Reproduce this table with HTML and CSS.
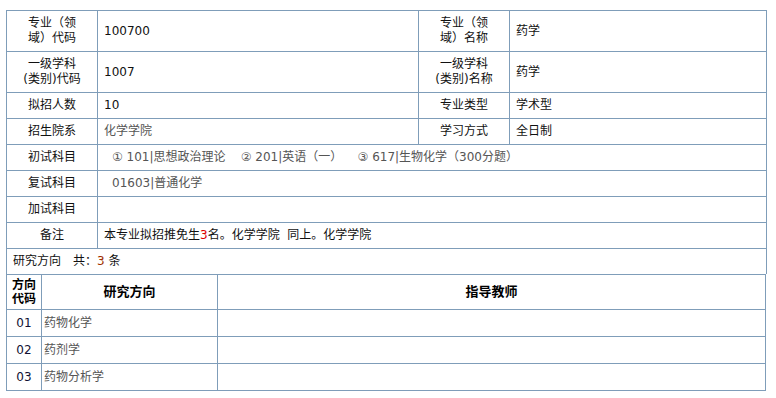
FILE: index.html
```html
<!DOCTYPE html>
<html lang="zh-CN">
<head>
<meta charset="utf-8">
<title>专业信息</title>
<link rel="stylesheet" href="styles.css">
</head>
<body>
<table class="info">
  <colgroup>
    <col class="c-label">
    <col class="c-value">
    <col class="c-label">
    <col class="c-value2">
  </colgroup>
  <tr class="tall">
    <td class="label">专业（领<br>域）代码</td>
    <td class="value">100700</td>
    <td class="label">专业（领<br>域）名称</td>
    <td class="value">药学</td>
  </tr>
  <tr class="tall">
    <td class="label">一级学科<br>(类别)代码</td>
    <td class="value">1007</td>
    <td class="label">一级学科<br>(类别)名称</td>
    <td class="value">药学</td>
  </tr>
  <tr>
    <td class="label">拟招人数</td>
    <td class="value">10</td>
    <td class="label">专业类型</td>
    <td class="value">学术型</td>
  </tr>
  <tr>
    <td class="label">招生院系</td>
    <td class="value gray">化学学院</td>
    <td class="label">学习方式</td>
    <td class="value">全日制</td>
  </tr>
  <tr>
    <td class="label">初试科目</td>
    <td class="value gray indent" colspan="3">①&nbsp;101|思想政治理论&nbsp;&nbsp;&nbsp;&nbsp;②&nbsp;201|英语（一）&nbsp;&nbsp;&nbsp;&nbsp;③&nbsp;617|生物化学（300分题）</td>
  </tr>
  <tr>
    <td class="label">复试科目</td>
    <td class="value gray indent" colspan="3">01603|普通化学</td>
  </tr>
  <tr>
    <td class="label">加试科目</td>
    <td class="value" colspan="3"></td>
  </tr>
  <tr>
    <td class="label">备注</td>
    <td class="value" colspan="3">本专业拟招推免生<span class="red">3</span>名。化学学院&nbsp;&nbsp;同上。化学学院</td>
  </tr>
  <tr class="last">
    <td class="value" colspan="4">研究方向　共：<span class="num">3</span> 条</td>
  </tr>
</table>
<table class="dir">
  <colgroup>
    <col class="d-code">
    <col class="d-name">
    <col class="d-teacher">
  </colgroup>
  <tr class="head">
    <th class="hcode">方向<br>代码</th>
    <th>研究方向</th>
    <th>指导教师</th>
  </tr>
  <tr>
    <td class="code">01</td>
    <td class="name">药物化学</td>
    <td></td>
  </tr>
  <tr>
    <td class="code">02</td>
    <td class="name">药剂学</td>
    <td></td>
  </tr>
  <tr>
    <td class="code">03</td>
    <td class="name">药物分析学</td>
    <td></td>
  </tr>
</table>
</body>
</html>
```

FILE: styles.css
```css
html, body {
  margin: 0;
  background: #ffffff;
}
body {
  padding: 10px 0 0 6px;
  font-family: "DejaVu Sans", "Noto Sans CJK SC", sans-serif;
  font-size: 12px;
  color: #111111;
}
table {
  border-collapse: collapse;
  table-layout: fixed;
  width: 760px;
}
td, th {
  border: 1px solid #7f9db9;
  padding: 5px 6px;
  line-height: 15px;
  vertical-align: middle;
}
.c-label { width: 91px; }
.c-value { width: 321px; }
.c-value2 { width: 257px; }
.info tr.tall td {
  padding-top: 5px;
  padding-bottom: 5px;
}
.label {
  text-align: center;
  color: #111111;
}
.value {
  text-align: left;
  color: #111111;
}
.gray {
  color: #555555;
}
.indent {
  padding-left: 14px;
}
.red {
  color: #dd0000;
}
.num {
  color: #a03000;
}
.info tr.last td {
  border-bottom: none;
}
.d-code { width: 35px; }
.d-name { width: 176px; }
.dir th {
  font-weight: bold;
  font-size: 13px;
  color: #000000;
  text-align: center;
  padding: 3px 1px;
  line-height: 14px;
}
.dir th.hcode {
  font-size: 12px;
  padding: 3px 0;
}
.dir td {
  padding: 5px 2px;
  line-height: 16px;
}
.dir .code {
  text-align: center;
  color: #111133;
}
.dir .name {
  color: #555555;
}
```
